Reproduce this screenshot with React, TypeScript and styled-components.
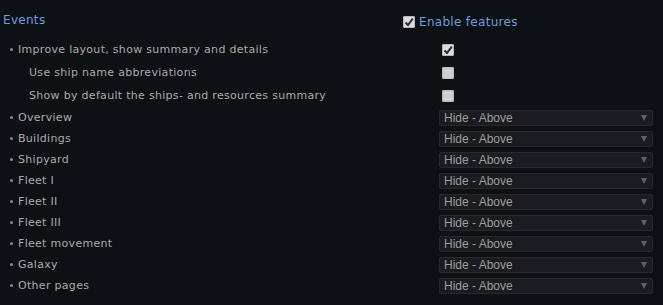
import styled, { createGlobalStyle } from "styled-components";

const GlobalStyle = createGlobalStyle`
  html, body {
    margin: 0;
    padding: 0;
    background: #0d1015;
  }
`;

const PAGES = [
  "Overview",
  "Buildings",
  "Shipyard",
  "Fleet I",
  "Fleet II",
  "Fleet III",
  "Fleet movement",
  "Galaxy",
  "Other pages",
];

const Section = styled.section`
  display: flex;
  flex-direction: column;
  width: 663px;
  height: 305px;
  padding-top: 8px;
  box-sizing: border-box;
  background: #0d1015;
  font-family: "DejaVu Sans", Verdana, sans-serif;
`;

const Header = styled.div`
  display: grid;
  grid-template-columns: 403px auto;
  align-items: center;
  height: 24px;
  margin-bottom: 6px;
`;

const Title = styled.h2`
  margin: 0 0 1px 3px;
  font-size: 12px;
  letter-spacing: 0.3px;
  font-weight: normal;
  color: #6f9dd8;
`;

const EnableLabel = styled.label`
  display: flex;
  align-items: center;
  gap: 4px;
  margin-top: 3px;
  font-size: 12px;
  letter-spacing: 0.3px;
  color: #6f9dd8;
`;

const Row = styled.div<{ $h: number }>`
  display: grid;
  grid-template-columns: 439px 214px;
  align-items: center;
  height: ${({ $h }) => $h}px;
`;

const Label = styled.div<{ $sub?: boolean }>`
  display: flex;
  align-items: center;
  gap: 5px;
  padding-left: ${({ $sub }) => ($sub ? "29px" : "10px")};
  font-size: 11px;
  letter-spacing: 0.3px;
  color: #aaaaaa;
`;

const Bullet = styled.span`
  width: 3px;
  height: 3px;
  border-radius: 50%;
  background: #8a8a8a;
`;

const CheckCell = styled.div`
  display: flex;
  padding-left: 3px;
`;

const Box = styled.span<{ $checked: boolean }>`
  display: inline-flex;
  align-items: center;
  justify-content: center;
  width: 12px;
  height: 12px;
  border-radius: 2px;
  background: ${({ $checked }) => ($checked ? "#dcdcdc" : "#cfcfcf")};
  box-shadow: inset 0 0 0 1px #b8b8b8;
`;

const Select = styled.div`
  display: flex;
  align-items: center;
  justify-content: space-between;
  height: 16px;
  padding: 0 5px 0 4px;
  border: 1px solid #262930;
  border-radius: 2px;
  background: #1a1c21;
  box-sizing: border-box;
  font-family: "Liberation Sans", Arial, sans-serif;
  font-size: 12px;
  color: #9d9d9d;
`;

const Arrow = styled.span`
  width: 0;
  height: 0;
  border-left: 3px solid transparent;
  border-right: 3px solid transparent;
  border-top: 6px solid #5f6064;
`;

function Check({ checked }: { checked: boolean }) {
  return (
    <Box $checked={checked}>
      {checked && (
        <svg width="10" height="10" viewBox="0 0 10 10">
          <path d="M1.5 5.5 L4 8 L8.8 1.6" fill="none" stroke="#2a2a2a" strokeWidth="2" />
        </svg>
      )}
    </Box>
  );
}

export default function App() {
  return (
    <Section>
      <GlobalStyle />
      <Header>
        <Title>Events</Title>
        <EnableLabel>
          <Check checked={true} />
          Enable features
        </EnableLabel>
      </Header>
      <Row $h={23}>
        <Label>
          <Bullet />
          Improve layout, show summary and details
        </Label>
        <CheckCell>
          <Check checked={true} />
        </CheckCell>
      </Row>
      <Row $h={23}>
        <Label $sub>Use ship name abbreviations</Label>
        <CheckCell>
          <Check checked={false} />
        </CheckCell>
      </Row>
      <Row $h={23}>
        <Label $sub>Show by default the ships- and resources summary</Label>
        <CheckCell>
          <Check checked={false} />
        </CheckCell>
      </Row>
      {PAGES.map((page) => (
        <Row $h={21} key={page}>
          <Label>
            <Bullet />
            {page}
          </Label>
          <Select>
            Hide - Above
            <Arrow />
          </Select>
        </Row>
      ))}
    </Section>
  );
}
